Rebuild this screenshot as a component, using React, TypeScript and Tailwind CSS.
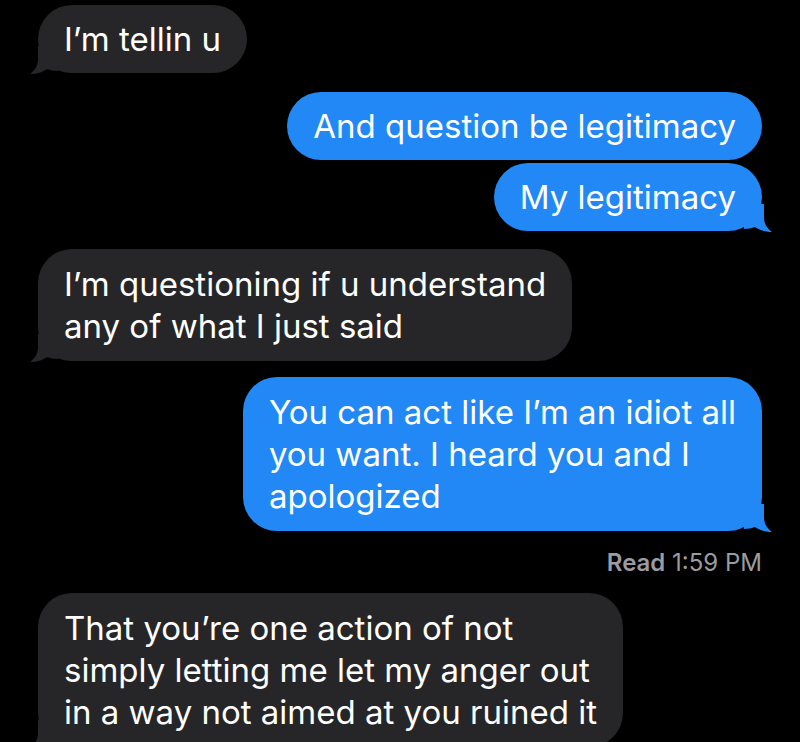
import React from "react";

type Side = "in" | "out";

function Tail({ side }: { side: Side }) {
  const color = side === "in" ? "#262629" : "#2188f5";
  if (side === "in") {
    return (
      <svg
        className="absolute -left-[8px] -bottom-[1px]"
        width="28"
        height="28"
        viewBox="0 0 28 28"
      >
        <path
          d="M8 0 L8 13 C8 20 5 24 0 28 C7 28 13 26 17 23 C20 24 24 25 28 25 L28 0 Z"
          fill={color}
        />
      </svg>
    );
  }
  return (
    <svg
      className="absolute -right-[10px] -bottom-[1px]"
      width="28"
      height="28"
      viewBox="0 0 28 28"
    >
      <path
        d="M20 0 L20 13 C20 20 23 24 28 28 C21 28 15 26 11 23 C8 24 4 25 0 25 L0 0 Z"
        fill={color}
      />
    </svg>
  );
}

function Bubble({
  side,
  tail,
  lines,
  className = "",
}: {
  side: Side;
  tail?: boolean;
  lines: string[];
  className?: string;
}) {
  const base =
    side === "in"
      ? "self-start bg-[#262629] text-white"
      : "self-end bg-[#2188f5] text-white";
  return (
    <div
      className={`relative w-fit rounded-[34px] px-[26px] py-[13px] text-[33px] leading-[42px] ${base} ${className}`}
    >
      {lines.map((l, i) => (
        <div key={i} className="whitespace-nowrap">
          {l}
        </div>
      ))}
      {tail && <Tail side={side} />}
    </div>
  );
}

export default function App() {
  return (
    <div
      className="w-[800px] h-[742px] overflow-hidden bg-black flex flex-col px-[38px] pt-[5px]"
      style={{ fontFamily: "Inter, 'Liberation Sans', sans-serif" }}
    >
      <Bubble side="in" tail lines={["I’m tellin u"]} />
      <Bubble
        side="out"
        lines={["And question be legitimacy"]}
        className="mt-[19px]"
      />
      <Bubble
        side="out"
        tail
        lines={["My legitimacy"]}
        className="mt-[3px]"
      />
      <Bubble
        side="in"
        tail
        lines={["I’m questioning if u understand", "any of what I just said"]}
        className="mt-[18px] py-[14px]"
      />
      <Bubble
        side="out"
        tail
        lines={[
          "You can act like I’m an idiot all",
          "you want. I heard you and I",
          "apologized",
        ]}
        className="mt-[16px] py-[14px]"
      />
      <div className="self-end mt-[18px] text-[24px] leading-[28px] text-[#9b9ba0]">
        <span className="font-semibold">Read</span> 1:59 PM
      </div>
      <Bubble
        side="in"
        tail
        lines={[
          "That you’re one action of not",
          "simply letting me let my anger out",
          "in a way not aimed at you ruined it",
        ]}
        className="mt-[16px] py-[14px]"
      />
    </div>
  );
}
